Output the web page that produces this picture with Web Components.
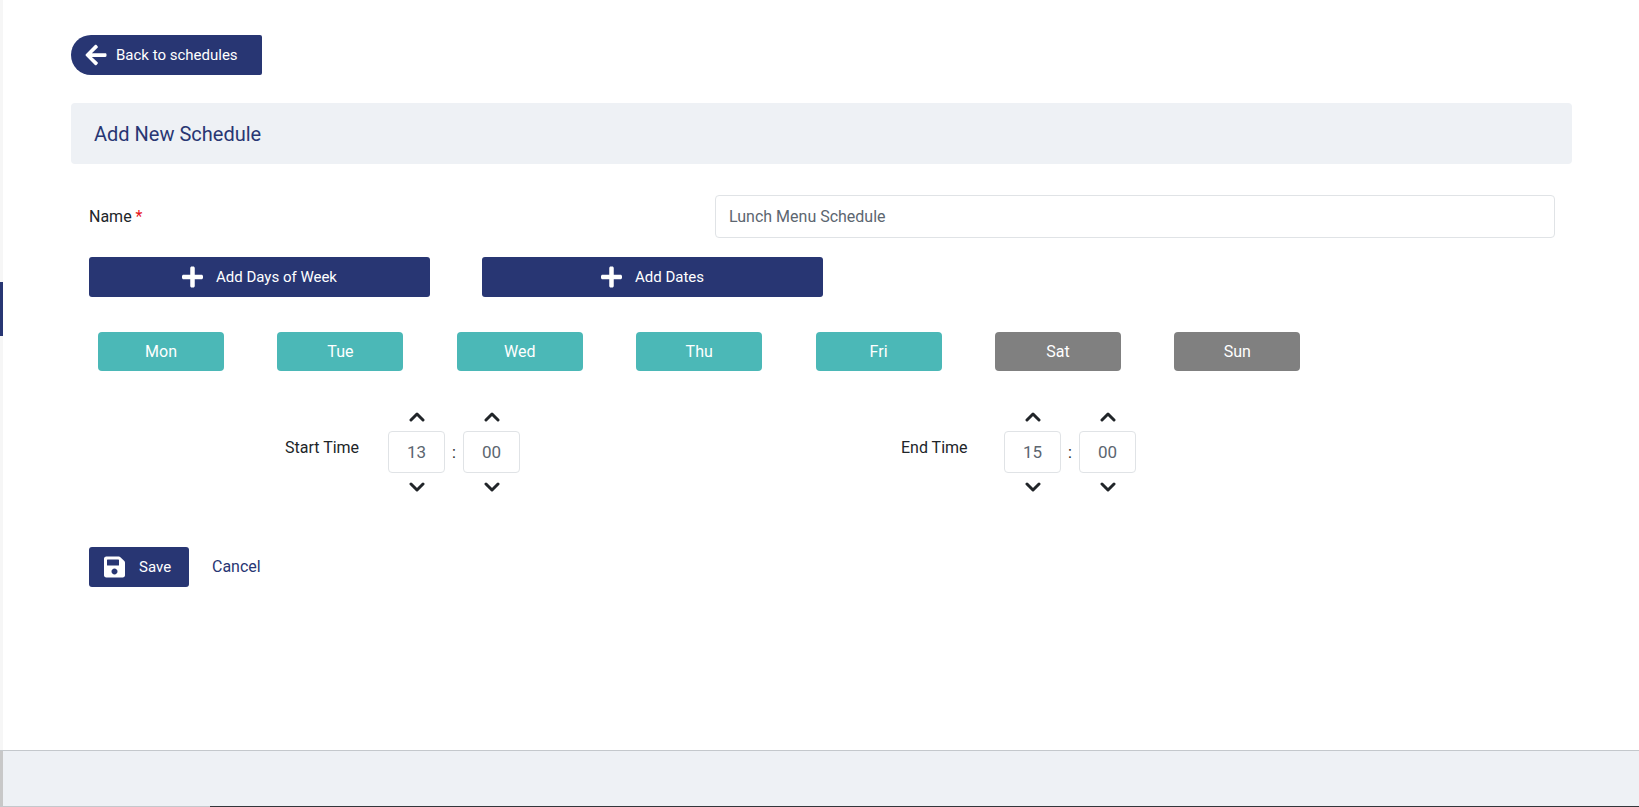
<!DOCTYPE html>
<html lang="en">
<head>
<meta charset="utf-8">
<title>Add New Schedule</title>
<style>
  html, body { margin: 0; padding: 0; background: #fff; }
  body { font-family: Roboto, "Liberation Sans", sans-serif; color: #212529; overflow: hidden; }
</style>
</head>
<body>

<schedule-page>
  <back-link>Back to schedules</back-link>
  <page-title>Add New Schedule</page-title>
  <schedule-form>
    <name-field value="Lunch Menu Schedule"></name-field>
    <div slot="actions">
      <action-button icon="plus" wide>Add Days of Week</action-button>
      <action-button icon="plus" wide>Add Dates</action-button>
    </div>
    <day-pill slot="days" active>Mon</day-pill>
    <day-pill slot="days" active>Tue</day-pill>
    <day-pill slot="days" active>Wed</day-pill>
    <day-pill slot="days" active>Thu</day-pill>
    <day-pill slot="days" active>Fri</day-pill>
    <day-pill slot="days">Sat</day-pill>
    <day-pill slot="days">Sun</day-pill>
    <time-picker slot="times" label="Start Time" hours="13" minutes="00"></time-picker>
    <time-picker slot="times" label="End Time" hours="15" minutes="00"></time-picker>
    <action-button slot="save" icon="save">Save</action-button>
    <a slot="save" href="#">Cancel</a>
  </schedule-form>
</schedule-page>

<script>
const NAVY = "#283673";

const ICONS = {
  back: `<svg viewBox="0 0 448 512" width="22" height="24" fill="#fff"><path d="M257.5 445.1l-22.2 22.2c-9.4 9.4-24.6 9.4-33.9 0L7 273c-9.4-9.4-9.4-24.6 0-33.9L201.4 44.7c9.4-9.4 24.6-9.4 33.9 0l22.2 22.2c9.5 9.5 9.3 25-.4 34.3L136.6 216H424c13.3 0 24 10.7 24 24v32c0 13.3-10.7 24-24 24H136.6l120.5 114.8c9.8 9.3 10 24.8.4 34.3z"/></svg>`,
  plus: `<svg viewBox="0 0 448 512" width="21" height="24" fill="#fff"><path d="M416 208H272V64c0-17.67-14.33-32-32-32h-32c-17.67 0-32 14.33-32 32v144H32c-17.67 0-32 14.33-32 32v32c0 17.67 14.33 32 32 32h144v144c0 17.67 14.33 32 32 32h32c17.67 0 32-14.33 32-32V304h144c17.67 0 32-14.33 32-32v-32c0-17.67-14.33-32-32-32z"/></svg>`,
  save: `<svg viewBox="0 0 448 512" width="21" height="24" fill="#fff"><path d="M433.941 129.941l-83.882-83.882A48 48 0 0 0 316.118 32H48C21.49 32 0 53.49 0 80v352c0 26.51 21.49 48 48 48h352c26.51 0 48-21.49 48-48V163.882a48 48 0 0 0-14.059-33.941zM224 416c-35.346 0-64-28.654-64-64 0-35.346 28.654-64 64-64s64 28.654 64 64c0 35.346-28.654 64-64 64zm96-304.52V212c0 6.627-5.373 12-12 12H76c-6.627 0-12-5.373-12-12V108c0-6.627 5.373-12 12-12h228.52c3.183 0 6.235 1.264 8.485 3.515l3.48 3.48A11.996 11.996 0 0 1 320 111.48z"/></svg>`,
  up: `<svg viewBox="0 0 16 10" width="16" height="10" fill="none" stroke="#212529" stroke-width="3" stroke-linecap="round" stroke-linejoin="round"><path d="M2 8l6-6 6 6"/></svg>`,
  down: `<svg viewBox="0 0 16 10" width="16" height="10" fill="none" stroke="#212529" stroke-width="3" stroke-linecap="round" stroke-linejoin="round"><path d="M2 2l6 6 6-6"/></svg>`
};

class SchedulePage extends HTMLElement {
  constructor() {
    super();
    this.attachShadow({ mode: "open" });
    this.shadowRoot.innerHTML = `
    <style>
      :host {
        display: flex;
        flex-direction: column;
        height: 807px;
        font-family: Roboto, "Liberation Sans", sans-serif;
      }
      .body { flex: 1; display: flex; min-height: 0; }
      .rail { width: 3px; background: #f6f6f6; flex: none; }
      .marker { width: 3px; height: 54px; margin-top: 282px; background: ${NAVY}; }
      .main { flex: 1; padding: 35px 67px 0 68px; }
      .footer {
        height: 56px;
        flex: none;
        display: flex;
        background: #eef1f5;
        border-top: 1px solid #c4c8cc;
        border-bottom: 1px solid #c4c8cc;
        box-sizing: content-box;
        height: 55px;
        position: relative;
      }
      .edge { width: 3px; background: #c8c8c8; }
      .dark { position: absolute; left: 210px; right: 0; bottom: -1px; height: 1px; background: #33373b; }
    </style>
    <div class="body">
      <div class="rail"><div class="marker"></div></div>
      <div class="main"><slot></slot></div>
    </div>
    <div class="footer"><div class="edge"></div><div class="dark"></div></div>
    `;
  }
}

class BackLink extends HTMLElement {
  constructor() {
    super();
    this.attachShadow({ mode: "open" });
    this.shadowRoot.innerHTML = `
    <style>
      :host {
        display: flex;
        align-items: center;
        width: 191px;
        height: 40px;
        box-sizing: border-box;
        padding-left: 14px;
        gap: 9px;
        margin-bottom: 28px;
        color: #fff;
        font-size: 15px;
        background: ${NAVY};
        border-radius: 20px 2px 2px 20px;
      }
      svg { display: block; }
    </style>
    ${ICONS.back}<span><slot></slot></span>
    `;
  }
}

class PageTitle extends HTMLElement {
  constructor() {
    super();
    this.attachShadow({ mode: "open" });
    this.shadowRoot.innerHTML = `
    <style>
      :host {
        display: flex;
        align-items: center;
        height: 61px;
        box-sizing: border-box;
        padding-left: 23px;
        margin-bottom: 31px;
        background: #eef1f5;
        border-radius: 4px;
        color: ${NAVY};
        font-size: 20px;
      }
    </style>
    <slot></slot>
    `;
  }
}

class ScheduleForm extends HTMLElement {
  constructor() {
    super();
    this.attachShadow({ mode: "open" });
    this.shadowRoot.innerHTML = `
    <style>
      :host { display: block; padding: 0 17px 0 18px; }
      .actions { margin: 19px 0 35px; }
      ::slotted([slot="actions"]) { display: flex; gap: 52px; }
      .days { display: flex; gap: 53.4px; padding-left: 9px; margin-bottom: 32px; }
      .times { display: grid; grid-template-columns: 616px 1fr; padding-left: 196px; margin-bottom: 46px; }
      .save { display: flex; align-items: center; gap: 23px; }
      ::slotted(a) { color: ${NAVY}; text-decoration: none; font-size: 16px; padding-bottom: 2px; }
    </style>
    <slot></slot>
    <div class="actions"><slot name="actions"></slot></div>
    <div class="days"><slot name="days"></slot></div>
    <div class="times"><slot name="times"></slot></div>
    <div class="save"><slot name="save"></slot></div>
    `;
  }
}

class NameField extends HTMLElement {
  constructor() {
    super();
    this.attachShadow({ mode: "open" });
  }

  connectedCallback() {
    this.shadowRoot.innerHTML = `
    <style>
      :host { display: grid; grid-template-columns: 626px 1fr; align-items: center; font-size: 16px; }
      .star { color: #e8141c; }
      input {
        display: block;
        width: 100%;
        height: 43px;
        box-sizing: border-box;
        padding: 0 13px;
        border: 1px solid #e0e3e6;
        border-radius: 4px;
        font: 16px Roboto, "Liberation Sans", sans-serif;
        color: #5c6670;
        background: #fff;
      }
    </style>
    <label>Name <span class="star">*</span></label>
    <input type="text" value="${this.getAttribute("value")}">
    `;
  }
}

class ActionButton extends HTMLElement {
  constructor() {
    super();
    this.attachShadow({ mode: "open" });
  }

  connectedCallback() {
    const wide = this.hasAttribute("wide");
    this.shadowRoot.innerHTML = `
    <style>
      :host {
        display: flex;
        align-items: center;
        justify-content: ${wide ? "center" : "flex-start"};
        gap: ${wide ? "13px" : "14px"};
        width: ${wide ? "341px" : "100px"};
        height: 40px;
        box-sizing: border-box;
        padding-left: ${wide ? "0" : "15px"};
        background: ${NAVY};
        border-radius: 3px;
        color: #fff;
        font-size: 15px;
      }
      svg { display: block; }
    </style>
    ${ICONS[this.getAttribute("icon")]}<span><slot></slot></span>
    `;
  }
}

class DayPill extends HTMLElement {
  constructor() {
    super();
    this.attachShadow({ mode: "open" });
    this.shadowRoot.innerHTML = `
    <style>
      :host {
        display: flex;
        align-items: center;
        justify-content: center;
        width: 126px;
        height: 39px;
        border-radius: 4px;
        background: #808080;
        color: #fff;
        font-size: 16px;
      }
      :host([active]) { background: #4bb8b7; }
    </style>
    <slot></slot>
    `;
  }
}

class TimePicker extends HTMLElement {
  constructor() {
    super();
    this.attachShadow({ mode: "open" });
  }

  connectedCallback() {
    this.shadowRoot.innerHTML = `
    <style>
      :host { display: flex; align-items: center; font-size: 16px; }
      .label { width: 103px; padding-bottom: 9px; color: #212529; }
      .grid {
        display: grid;
        grid-template-columns: 57px 18px 57px;
        grid-template-rows: 28px 42px 28px;
        justify-items: center;
        align-items: center;
      }
      .box {
        width: 57px;
        height: 42px;
        box-sizing: border-box;
        display: flex;
        align-items: center;
        justify-content: center;
        border: 1px solid #e0e3e6;
        border-radius: 4px;
        color: #5c6670;
        font-size: 17px;
      }
      svg { display: block; }
    </style>
    <span class="label">${this.getAttribute("label")}</span>
    <div class="grid">
      ${ICONS.up}<span></span>${ICONS.up}
      <div class="box">${this.getAttribute("hours")}</div><span>:</span><div class="box">${this.getAttribute("minutes")}</div>
      ${ICONS.down}<span></span>${ICONS.down}
    </div>
    `;
  }
}

customElements.define("schedule-page", SchedulePage);
customElements.define("back-link", BackLink);
customElements.define("page-title", PageTitle);
customElements.define("schedule-form", ScheduleForm);
customElements.define("name-field", NameField);
customElements.define("action-button", ActionButton);
customElements.define("day-pill", DayPill);
customElements.define("time-picker", TimePicker);
</script>
</body>
</html>
